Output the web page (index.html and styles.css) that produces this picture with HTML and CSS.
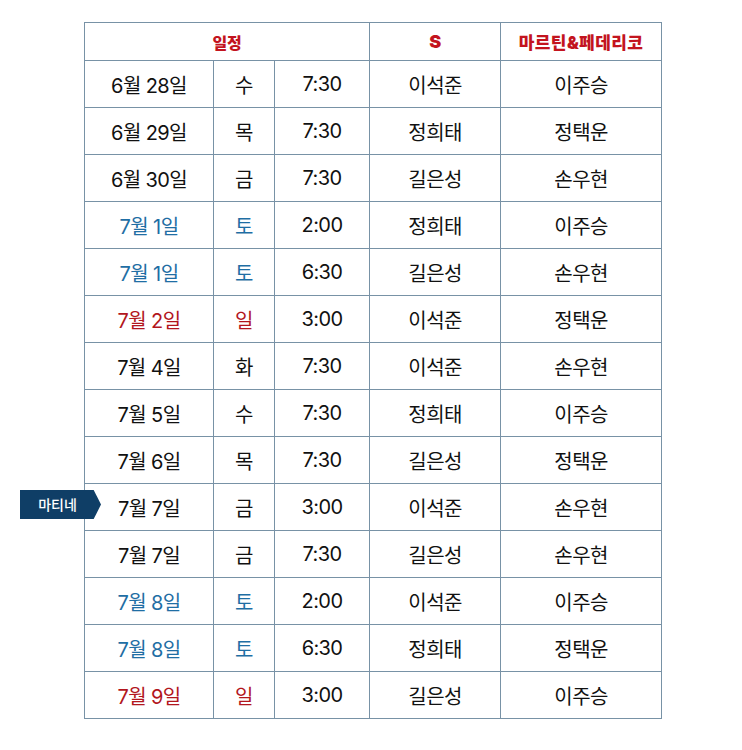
FILE: index.html
```html
<!DOCTYPE html>
<html lang="ko">
<head>
<meta charset="utf-8">
<link rel="stylesheet" href="styles.css">
</head>
<body>
<div class="wrap">
<table class="sched">
<colgroup>
<col class="c1"><col class="c2"><col class="c3"><col class="c4"><col class="c5">
</colgroup>
<thead>
<tr><th colspan="3">일정</th><th class="s">S</th><th class="wide">마르틴&amp;페데리코</th></tr>
</thead>
<tbody>
<tr><td>6월 28일</td><td>수</td><td>7:30</td><td>이석준</td><td>이주승</td></tr>
<tr><td>6월 29일</td><td>목</td><td>7:30</td><td>정희태</td><td>정택운</td></tr>
<tr><td>6월 30일</td><td>금</td><td>7:30</td><td>길은성</td><td>손우현</td></tr>
<tr class="sat"><td class="d">7월 1일</td><td class="d">토</td><td>2:00</td><td>정희태</td><td>이주승</td></tr>
<tr class="sat"><td class="d">7월 1일</td><td class="d">토</td><td>6:30</td><td>길은성</td><td>손우현</td></tr>
<tr class="sun"><td class="d">7월 2일</td><td class="d">일</td><td>3:00</td><td>이석준</td><td>정택운</td></tr>
<tr><td>7월 4일</td><td>화</td><td>7:30</td><td>이석준</td><td>손우현</td></tr>
<tr><td>7월 5일</td><td>수</td><td>7:30</td><td>정희태</td><td>이주승</td></tr>
<tr><td>7월 6일</td><td>목</td><td>7:30</td><td>길은성</td><td>정택운</td></tr>
<tr><td class="mat">7월 7일<span class="badge">마티네</span></td><td>금</td><td>3:00</td><td>이석준</td><td>손우현</td></tr>
<tr><td>7월 7일</td><td>금</td><td>7:30</td><td>길은성</td><td>손우현</td></tr>
<tr class="sat"><td class="d">7월 8일</td><td class="d">토</td><td>2:00</td><td>이석준</td><td>이주승</td></tr>
<tr class="sat"><td class="d">7월 8일</td><td class="d">토</td><td>6:30</td><td>정희태</td><td>정택운</td></tr>
<tr class="sun"><td class="d">7월 9일</td><td class="d">일</td><td>3:00</td><td>길은성</td><td>이주승</td></tr>
</tbody>
</table>
</div>
</body>
</html>
```
FILE: styles.css
```css
html, body {
  margin: 0;
  padding: 0;
  background: #ffffff;
}
body {
  font-family: "Inter", "Noto Sans CJK KR", "Noto Sans", sans-serif;
  color: #111111;
}
.wrap {
  padding: 22px 0 0 84px;
}
.sched {
  border-collapse: collapse;
  table-layout: fixed;
  width: 577px;
}
.c1 { width: 129px; }
.c2 { width: 61px; }
.c3 { width: 95px; }
.c4 { width: 131px; }
.c5 { width: 161px; }
.sched th, .sched td {
  border: 1.5px solid #7892a6;
  text-align: center;
  padding: 0;
}
.sched th {
  height: 37px;
  color: #c3141e;
  font-size: 16px;
  font-weight: 900;
  letter-spacing: -0.3px;
}
.sched th.s {
  font-size: 18px;
}
.sched th.wide {
  font-size: 17px;
  letter-spacing: 0.4px;
}
.sched td {
  height: 46px;
  font-size: 20px;
  font-weight: 400;
  letter-spacing: -0.6px;
}
.sat td.d { color: #1f6ea4; }
.sun td.d { color: #b2161d; }
.mat {
  position: relative;
}
.badge {
  position: absolute;
  left: -65px;
  top: 6px;
  width: 81px;
  height: 29px;
  background: #0f3e66;
  color: #ffffff;
  font-size: 14px;
  font-weight: 500;
  line-height: 29px;
  letter-spacing: 0;
  text-indent: -6px;
  clip-path: polygon(0 0, 91% 0, 100% 50%, 91% 100%, 0 100%);
}
```
